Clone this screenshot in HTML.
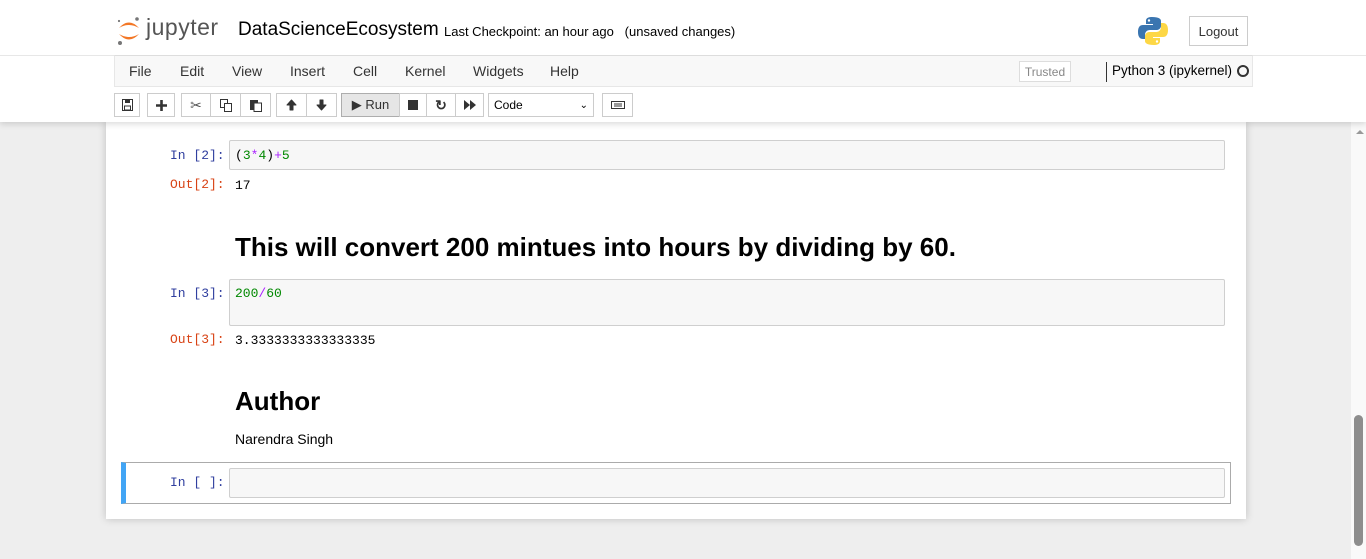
<!DOCTYPE html>
<html><head><meta charset="utf-8"><style>
*{box-sizing:border-box;margin:0;padding:0}
body{width:1366px;height:559px;overflow:hidden;background:#eee;font-family:"Liberation Sans",sans-serif;position:relative;font-size:13px;color:#000}
.a{position:absolute}
.hdr{left:0;top:0;width:1366px;height:122px;background:#fff;box-shadow:0 2px 6px rgba(0,0,0,.15);z-index:2}
.menu{left:114px;top:55px;width:1139px;height:32px;background:#f8f8f8;border:1px solid #e7e7e7;border-top:1px solid #ddd}
.menu span{position:absolute;top:7px;font-size:14px;color:#333}
.btn{position:absolute;top:93px;height:24px;border:1px solid #ccc;background:#fff;display:flex;align-items:center;justify-content:center;font-size:12px;color:#333}
.nb{left:106px;top:122px;width:1140px;height:397px;background:#fff;box-shadow:0 0 8px rgba(0,0,0,.2)}
.mono{font-family:"Liberation Mono",monospace;font-size:13px}
.pin{color:#303f9f}.pout{color:#d84315}
.inp{background:#f7f7f7;border:1px solid #cfcfcf;border-radius:2px}
</style></head><body>
<div class="a hdr">
 <svg class="a" style="left:116px;top:15px" width="26" height="32" viewBox="0 0 26 32">
  <path d="M3 13 Q13 2 23 13 Q13 7 3 13Z" fill="#f37726"/>
  <path d="M3 19 Q13 30 23 19 Q13 25 3 19Z" fill="#f37726"/>
  <circle cx="21" cy="4" r="1.8" fill="#767677"/><circle cx="4" cy="28" r="2" fill="#767677"/><circle cx="3" cy="6" r="1.1" fill="#767677"/>
 </svg>
 <div class="a" style="left:146px;top:14px;font-size:23px;color:#555;letter-spacing:.5px">jupyter</div>
 <div class="a" style="left:238px;top:19px;font-size:19px;color:#000">DataScienceEcosystem</div>
 <div class="a" style="left:444px;top:24px;font-size:13px">Last Checkpoint: an hour ago &nbsp; (unsaved changes)</div>
 <svg class="a" style="left:1138px;top:16px" width="30" height="30" viewBox="0 0 30 30">
  <path d="M14 1c-6 0-6 3-6 4v3h7v1H5c-3 0-5 2-5 7s2 7 5 7h2v-4c0-3 2-5 5-5h7c2 0 4-2 4-4V5c0-2-2-4-9-4z" fill="#3a75b0"/>
  <path d="M16 29c6 0 6-3 6-4v-3h-7v-1h10c3 0 5-2 5-7s-2-7-5-7h-2v4c0 3-2 5-5 5h-7c-2 0-4 2-4 4v5c0 2 2 4 9 4z" fill="#fdd745"/>
  <circle cx="11" cy="4.5" r="1.2" fill="#fff"/><circle cx="19" cy="25.5" r="1.2" fill="#fff"/>
 </svg>
 <div class="a" style="left:1189px;top:16px;width:59px;height:30px;border:1px solid #ccc;font-size:13px;display:flex;align-items:center;justify-content:center;color:#333">Logout</div>
 <div class="a" style="left:0;top:55px;width:1366px;border-top:1px solid #e7e7e7"></div>
 <div class="a menu">
  <span style="left:14px">File</span><span style="left:65px">Edit</span><span style="left:117px">View</span><span style="left:175px">Insert</span><span style="left:238px">Cell</span><span style="left:290px">Kernel</span><span style="left:358px">Widgets</span><span style="left:435px">Help</span>
  <div class="a" style="left:904px;top:5px;width:52px;height:21px;border:1px solid #ddd;background:#fff;color:#888;font-size:12px;display:flex;align-items:center;justify-content:center">Trusted</div>
  <div class="a" style="left:991px;top:6px;height:20px;border-left:1px solid #333"></div>
  <span style="left:997px;top:7px;color:#000;font-size:13.5px">Python 3 (ipykernel)</span>
  <div class="a" style="left:1122px;top:9px;width:12px;height:12px;border:2px solid #333;border-radius:50%"></div>
 </div>
 <div class="btn" style="left:114px;width:26px"><svg width="11" height="12"><rect x=".5" y=".5" width="10" height="11" fill="none" stroke="#333"/><rect x="3" y="1" width="5" height="3" fill="#333"/><rect x="2.5" y="7" width="6" height="4" fill="none" stroke="#333"/></svg></div>
 <div class="btn" style="left:147px;width:28px"><svg width="11" height="11"><path d="M5.5 0v11M0 5.5h11" stroke="#333" stroke-width="2.6"/></svg></div>
 <div class="btn" style="left:181px;width:30px;font-size:14px;color:#555">✂</div>
 <div class="btn" style="left:210px;width:31px"><svg width="12" height="13"><rect x=".5" y=".5" width="7" height="8" fill="#fff" stroke="#333"/><rect x="4.5" y="4.5" width="7" height="8" fill="#fff" stroke="#333"/></svg></div>
 <div class="btn" style="left:240px;width:31px"><svg width="12" height="13"><rect x="0" y="1" width="8" height="10" fill="#333"/><rect x="4" y="4" width="7.5" height="8.5" fill="#fff" stroke="#333"/></svg></div>
 <div class="btn" style="left:276px;width:31px"><svg width="11" height="12"><path d="M5.5 1L1 6h3v5h3V6h3z" fill="#333" stroke="#333" stroke-linejoin="round"/></svg></div>
 <div class="btn" style="left:306px;width:31px"><svg width="11" height="12"><path d="M5.5 11L1 6h3V1h3v5h3z" fill="#333" stroke="#333" stroke-linejoin="round"/></svg></div>
 <div class="btn" style="left:341px;width:59px;background:#e6e6e6;border-color:#adadad;font-size:13px">▶ Run</div>
 <div class="btn" style="left:399px;width:28px"><div style="width:10px;height:10px;background:#333"></div></div>
 <div class="btn" style="left:426px;width:30px;font-weight:bold;font-size:14px">↻</div>
 <div class="btn" style="left:455px;width:29px"><svg width="12" height="10"><path d="M0 0l6 5-6 5zM6 0l6 5-6 5z" fill="#333"/></svg></div>
 <div class="btn" style="left:488px;width:106px;justify-content:space-between;padding:0 5px;color:#000">Code<span style="font-size:10px">⌄</span></div>
 <div class="btn" style="left:602px;width:31px"><svg width="14" height="8"><rect x=".5" y=".5" width="13" height="7" fill="none" stroke="#333"/><path d="M3 3h8M3 5h8" stroke="#333"/></svg></div>
</div>
<div class="a nb"></div>
<div class="a mono pin" style="left:170px;top:148px">In [2]:</div>
<div class="a inp" style="left:229px;top:140px;width:996px;height:30px"></div>
<div class="a mono" style="left:235px;top:148px"><span style="color:#000">(</span><span style="color:#080">3</span><span style="color:#a2f">*</span><span style="color:#080">4</span>)<span style="color:#a2f">+</span><span style="color:#080">5</span></div>
<div class="a mono pout" style="left:170px;top:177px">Out[2]:</div>
<div class="a mono" style="left:235px;top:178px">17</div>
<div class="a" style="left:235px;top:232px;font-size:26px;font-weight:bold">This will convert 200 mintues into hours by dividing by 60.</div>
<div class="a mono pin" style="left:170px;top:286px">In [3]:</div>
<div class="a inp" style="left:229px;top:279px;width:996px;height:47px"></div>
<div class="a mono" style="left:235px;top:286px"><span style="color:#080">200</span><span style="color:#a2f">/</span><span style="color:#080">60</span></div>
<div class="a mono pout" style="left:170px;top:332px">Out[3]:</div>
<div class="a mono" style="left:235px;top:333px">3.3333333333333335</div>
<div class="a" style="left:235px;top:386px;font-size:26px;font-weight:bold">Author</div>
<div class="a" style="left:235px;top:431px;font-size:14px">Narendra Singh</div>
<div class="a" style="left:121px;top:462px;width:1110px;height:42px;border:1px solid #ababab;border-left:5px solid #42a5f5"></div>
<div class="a mono pin" style="left:170px;top:475px">In [ ]:</div>
<div class="a inp" style="left:229px;top:468px;width:996px;height:30px"></div>
<div class="a" style="left:1351px;top:122px;width:15px;height:437px;background:#f9f9f9"></div>
<div class="a" style="left:1356px;top:130px;width:0;height:0;border-left:4px solid transparent;border-right:4px solid transparent;border-bottom:4px solid #999"></div>
<div class="a" style="left:1354px;top:415px;width:9px;height:131px;background:#8d8d8d;border-radius:5px"></div>
</body></html>
